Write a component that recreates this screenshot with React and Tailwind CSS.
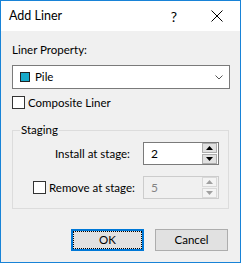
import { useState } from 'react'

const font = { fontFamily: 'Lato, "Noto Sans", "Liberation Sans", sans-serif' }

function Check({ checked, onChange }) {
  return (
    <button
      onClick={onChange}
      className="w-[13px] h-[13px] border border-[#333] bg-white flex items-center justify-center shrink-0"
    >
      {checked && (
        <svg width="9" height="9" viewBox="0 0 9 9">
          <path d="M1 4.5 L3.5 7 L8 1.5" fill="none" stroke="#000" strokeWidth="1.4" />
        </svg>
      )}
    </button>
  )
}

function Spin({ value, disabled }) {
  const arrow = disabled ? '#a0a0a0' : '#000'
  return (
    <div
      className={`w-[76px] h-[23px] border flex items-center pl-[7px] pr-[1px] ${
        disabled ? 'border-[#cccccc] bg-[#f0f0f0] text-[#838383]' : 'border-[#7a7a7a] bg-white text-black'
      }`}
    >
      <span className="flex-1 leading-none text-[12px]">{value}</span>
      <div className="flex flex-col gap-[1px]">
        <div className={`w-[15px] h-[10px] border flex items-center justify-center ${disabled ? 'border-[#d9d9d9] bg-[#f4f4f4]' : 'border-[#adadad] bg-[#e1e1e1]'}`}>
          <svg width="7" height="4" viewBox="0 0 7 4"><path d="M0 4 L3.5 0 L7 4 Z" fill={arrow} /></svg>
        </div>
        <div className={`w-[15px] h-[10px] border flex items-center justify-center ${disabled ? 'border-[#d9d9d9] bg-[#f4f4f4]' : 'border-[#adadad] bg-[#e1e1e1]'}`}>
          <svg width="7" height="4" viewBox="0 0 7 4"><path d="M0 0 L7 0 L3.5 4 Z" fill={arrow} /></svg>
        </div>
      </div>
    </div>
  )
}

export default function App() {
  const [composite, setComposite] = useState(false)
  const [remove, setRemove] = useState(false)

  return (
    <div style={font} className="w-[241px] h-[263px] border border-[#1883d7] flex flex-col text-[11.5px] text-black whitespace-nowrap">
      {/* Title bar */}
      <div className="h-[30px] bg-white flex items-center pl-[8px] shrink-0">
        <span className="text-[12.5px] flex-1">Add Liner</span>
        <span className="text-[14px] mr-[34px]">?</span>
        <svg width="12" height="12" viewBox="0 0 12 12" className="mr-[17px]">
          <path d="M0.5 0.5 L11.5 11.5 M11.5 0.5 L0.5 11.5" stroke="#000" strokeWidth="1" />
        </svg>
      </div>

      {/* Body */}
      <div className="flex-1 bg-[#f0f0f0] pl-[11px] pr-[10px] pt-[11px] flex flex-col">
        <div className="h-[15px] leading-[15px]">Liner Property:</div>

        <div className="mt-[8px] w-[218px] h-[24px] border border-[#7a7a7a] bg-white flex items-center pl-[7px] pr-[6px]">
          <div className="w-[10px] h-[10px] bg-[#17a9c9] border border-[#222]" />
          <span className="ml-[5px] flex-1">Pile</span>
          <svg width="8" height="5" viewBox="0 0 8 5">
            <path d="M0.5 0.5 L4 4 L7.5 0.5" fill="none" stroke="#555" strokeWidth="1" />
          </svg>
        </div>

        <div className="mt-[7px] flex items-center h-[13px]">
          <Check checked={composite} onChange={() => setComposite(!composite)} />
          <span className="ml-[3px]">Composite Liner</span>
        </div>

        {/* Staging group */}
        <div className="relative mt-[21px] w-[217px] h-[79px] border border-[#dcdcdc] flex flex-col pt-[11px] pb-[9px] justify-between">
          <span className="absolute -top-[9px] left-[7px] px-[1px] bg-[#f0f0f0] leading-[15px]">Staging</span>
          <div className="flex items-center">
            <div className="w-[130px] text-right pr-[13px]">Install at stage:</div>
            <Spin value="2" />
          </div>
          <div className="flex items-center">
            <div className="w-[130px] flex items-center pl-[20px]">
              <Check checked={remove} onChange={() => setRemove(!remove)} />
              <span className="ml-[3px]">Remove at stage:</span>
            </div>
            <Spin value="5" disabled={!remove} />
          </div>
        </div>

        <div className="mt-[20px] flex justify-end pr-[2px] gap-[11px]">
          <button className="w-[73px] h-[22px] border-2 border-[#0078d7] bg-[#e1e1e1] p-0">
            <div className="w-full h-full border border-dotted border-black flex items-center justify-center">OK</div>
          </button>
          <button className="w-[73px] h-[22px] border border-[#adadad] bg-[#e1e1e1] flex items-center justify-center">
            Cancel
          </button>
        </div>
      </div>
    </div>
  )
}
